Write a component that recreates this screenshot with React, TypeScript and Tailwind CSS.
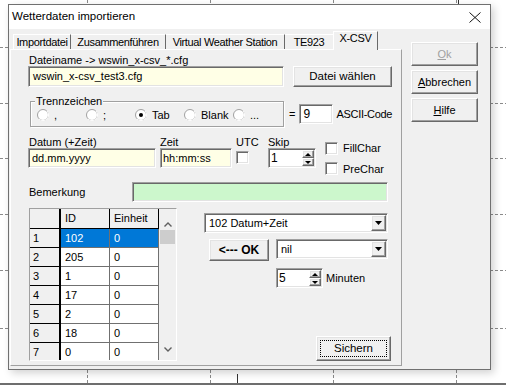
import React from 'react';

// classic win32 3D edges
const raised =
  'bg-[#f0f0f0] border border-t-white border-l-white border-r-[#696969] border-b-[#696969] shadow-[inset_-1px_-1px_0_#a0a0a0,inset_1px_1px_0_#e3e3e3]';
const sunken =
  'border border-t-[#a0a0a0] border-l-[#a0a0a0] border-r-white border-b-white shadow-[inset_1px_1px_0_#696969,inset_-1px_-1px_0_#e3e3e3]';

const rows = [
  ['1', '102', '0'],
  ['2', '205', '0'],
  ['3', '1', '0'],
  ['4', '17', '0'],
  ['5', '2', '0'],
  ['6', '18', '0'],
  ['7', '0', '0'],
];

function Radio({ checked, label }: { checked?: boolean; label: string }) {
  return (
    <div className="flex items-center w-[49px]">
      <svg width="12" height="12" viewBox="0 0 12 12" className="shrink-0">
        <circle cx="6" cy="6" r="5.5" fill="#ffffff" stroke="#a0a0a0" />
        <path d="M2 10 A5.5 5.5 0 0 0 10 2" stroke="#ffffff" fill="none" />
        {checked && <circle cx="6" cy="6" r="2" fill="#000000" />}
      </svg>
      <span className="ml-[5px]">{label}</span>
    </div>
  );
}

function CheckBox() {
  return <div className={`w-[13px] h-[13px] bg-white ${sunken}`} />;
}

function Spin({ value, width }: { value: string; width: string }) {
  return (
    <div className={`flex bg-white h-[20px] ${width} ${sunken}`}>
      <span className="flex-1 pl-[2px] leading-[18px] text-[12px]">{value}</span>
      <div className="flex flex-col w-[12px] my-[1px] mr-[1px]">
        <div className={`flex-1 flex items-center justify-center ${raised}`}>
          <svg width="6" height="3" viewBox="0 0 6 3"><path d="M0 3 L3 0 L6 3 Z" fill="#000" /></svg>
        </div>
        <div className={`flex-1 flex items-center justify-center ${raised}`}>
          <svg width="6" height="3" viewBox="0 0 6 3"><path d="M0 0 L3 3 L6 0 Z" fill="#000" /></svg>
        </div>
      </div>
    </div>
  );
}

function Combo({ value, width }: { value: string; width: string }) {
  return (
    <div className={`flex bg-white h-[20px] ${width} ${sunken}`}>
      <span className="flex-1 pl-[4px] leading-[18px]">{value}</span>
      <div className={`w-[15px] my-[1px] mr-[1px] flex items-center justify-center ${raised}`}>
        <svg width="7" height="4" viewBox="0 0 7 4"><path d="M0 0 L3.5 4 L7 0 Z" fill="#000" /></svg>
      </div>
    </div>
  );
}

function Chevron({ up }: { up?: boolean }) {
  return (
    <svg width="8" height="5" viewBox="0 0 8 5">
      <path d={up ? 'M0.5 4.5 L4 1 L7.5 4.5' : 'M0.5 0.5 L4 4 L7.5 0.5'} stroke="#606060" strokeWidth="1.4" fill="none" />
    </svg>
  );
}

function Grid() {
  return (
    <div className={`flex w-[148px] h-[153px] bg-white overflow-hidden ${sunken}`}>
      <div className="w-[129px] overflow-hidden">
        <div className="flex h-[20px]">
          <div className="w-[31px] bg-[#f0f0f0] border-r-2 border-b border-black" />
          <div className="w-[49px] bg-[#f0f0f0] border-r border-b border-black pl-[4px] leading-[19px]">ID</div>
          <div className="w-[49px] bg-[#f0f0f0] border-r border-b border-black pl-[4px] leading-[19px]">Einheit</div>
        </div>
        {rows.map((r, i) => (
          <div key={r[0]} className="flex h-[19px]">
            <div className="w-[31px] bg-[#f0f0f0] border-r-2 border-b border-black pl-[3px] leading-[18px]">{r[0]}</div>
            <div
              className={`w-[49px] border-r border-b border-[#707070] pl-[4px] leading-[18px] ${
                i === 0 ? 'bg-[#0078d7] text-white' : 'bg-white'
              }`}
            >
              {r[1]}
            </div>
            <div
              className={`w-[49px] border-r border-b border-[#707070] pl-[4px] leading-[18px] ${
                i === 0 ? 'bg-[#0078d7] text-white' : 'bg-white'
              }`}
            >
              {r[2]}
            </div>
          </div>
        ))}
      </div>
      <div className="w-[17px] bg-[#f0f0f0] flex flex-col items-center">
        <div className="h-[18px] flex items-end">
          <Chevron up />
        </div>
        <div className="mt-[3px] w-[15px] h-[14px] bg-[#cdcdcd]" />
        <div className="mt-auto mb-[8px]">
          <Chevron />
        </div>
      </div>
    </div>
  );
}

export default function App() {
  return (
    <div className="relative w-[506px] h-[385px] bg-white overflow-hidden font-['Liberation_Sans',Arial,sans-serif] text-[11px] text-black">
      <svg className="absolute inset-0" width="506" height="385">
        {[47, 103, 158, 214, 270, 328].map((y) => (
          <line key={y} x1="0" y1={y + 0.5} x2="506" y2={y + 0.5} stroke="#8a8a8a" strokeDasharray="3 2" />
        ))}
        {[87, 210, 333, 456].map((x) => (
          <line key={x} x1={x + 0.5} y1="0" x2={x + 0.5} y2="385" stroke="#8a8a8a" strokeDasharray="3 2" />
        ))}
        <line x1="237.5" y1="374" x2="237.5" y2="383" stroke="#333" />
        <line x1="458.5" y1="0" x2="458.5" y2="4" stroke="#333" />
      </svg>

      <div className="relative flex flex-col h-full">
        <div className="ml-[8px] mt-[4px] w-[483px] h-[366px] flex flex-col border border-[#707070] shadow-[3px_3px_8px_rgba(0,0,0,0.18)]">
          {/* title bar */}
          <div className="h-[24px] bg-white flex items-center pl-[3px] text-[11.5px]">
            <span>Wetterdaten importieren</span>
            <svg className="ml-auto mr-[9px]" width="12" height="11" viewBox="0 0 12 11">
              <path d="M0.5 0.5 L11.5 10.5 M11.5 0.5 L0.5 10.5" stroke="#111" strokeWidth="1" />
            </svg>
          </div>

          {/* body */}
          <div className="flex-1 bg-[#f0f0f0] flex">
            <div className="ml-[1px] w-[392px] flex flex-col">
              {/* tabs */}
              <div className="h-[20px] flex items-end pl-[3px] tracking-[-0.35px]">
                <div className="w-[58px] h-[15px] border-l border-t border-white border-r border-r-[#696969] text-center leading-[14px]">Importdatei</div>
                <div className="w-[95px] h-[15px] border-t border-white border-r border-r-[#696969] text-center leading-[14px]">Zusammenführen</div>
                <div className="w-[119px] h-[15px] border-t border-white border-r border-r-[#696969] text-center leading-[14px]">Virtual Weather Station</div>
                <div className="w-[48px] h-[15px] border-t border-white text-center leading-[14px]">TE923</div>
                <div className="relative z-10 -mb-px w-[45px] h-[19px] bg-[#f0f0f0] border-l border-t border-white border-r border-r-[#696969] text-center leading-[13px]">X-CSV</div>
              </div>

              {/* panel */}
              <div className="h-[317px] border border-t-white border-l-white border-r-[#a0a0a0] border-b-[#a0a0a0] pl-[17px] pt-[4px]">
                <div className="ml-[1px] h-[12px] leading-[12px]">Dateiname -&gt; wswin_x-csv_*.cfg</div>
                <div className="flex">
                  <div className={`w-[256px] h-[21px] bg-[#ffffe6] pl-[4px] leading-[19px] ${sunken}`}>wswin_x-csv_test3.cfg</div>
                  <div className={`ml-[9px] w-[99px] h-[21px] flex items-center justify-center text-[11.5px] ${raised}`}>Datei wählen</div>
                </div>

                {/* Trennzeichen */}
                <div className="mt-[9px] flex items-start">
                  <div className="relative ml-[2px] pt-[5px]">
                    <div className="w-[254px] h-[26px] border border-[#a0a0a0] shadow-[inset_1px_1px_0_#ffffff,1px_1px_0_#ffffff] flex items-center pl-[6px] pt-[2px]">
                      <Radio label="," />
                      <Radio label=";" />
                      <Radio checked label="Tab" />
                      <Radio label="Blank" />
                      <Radio label="..." />
                    </div>
                    <span className="absolute top-0 left-[5px] bg-[#f0f0f0] px-[1px] leading-[11px]">Trennzeichen</span>
                  </div>
                  <div className="ml-[5px] mt-[8px] flex items-center">
                    <span>=</span>
                    <div className={`ml-[4px] w-[34px] h-[20px] bg-white pl-[3px] leading-[18px] text-[12px] ${sunken}`}>9</div>
                    <span className="ml-[3px] tracking-[-0.3px]">ASCII-Code</span>
                  </div>
                </div>

                {/* Datum / Zeit / UTC / Skip */}
                <div className="mt-[9px] flex items-start">
                  <div className="w-[128px]">
                    <div className="ml-[1px] h-[12px] leading-[12px]">Datum (+Zeit)</div>
                    <div className={`h-[20px] bg-[#ffffe6] pl-[3px] leading-[18px] ${sunken}`}>dd.mm.yyyy</div>
                  </div>
                  <div className="ml-[4px] w-[72px]">
                    <div className="h-[12px] leading-[12px]">Zeit</div>
                    <div className={`h-[20px] bg-[#ffffe6] pl-[2px] leading-[18px] ${sunken}`}>hh:mm:ss</div>
                  </div>
                  <div className="ml-[4px] w-[32px]">
                    <div className="h-[12px] leading-[12px]">UTC</div>
                    <div className="mt-[3px]">
                      <CheckBox />
                    </div>
                  </div>
                  <div>
                    <div className="h-[12px] leading-[12px]">Skip</div>
                    <Spin value="1" width="w-[48px]" />
                  </div>
                  <div className="ml-[9px] mt-[4px] flex flex-col gap-[4px]">
                    <div className="flex items-center">
                      <CheckBox />
                      <span className="ml-[5px]">FillChar</span>
                    </div>
                    <div className="flex items-center">
                      <CheckBox />
                      <span className="ml-[5px]">PreChar</span>
                    </div>
                  </div>
                </div>

                {/* Bemerkung */}
                <div className="mt-[5px] flex items-center h-[20px]">
                  <span className="ml-[1px] w-[103px]">Bemerkung</span>
                  <div className={`w-[256px] h-[20px] bg-[#ccf7cc] ${sunken}`} />
                </div>

                {/* grid + mapping */}
                <div className="mt-[6px] flex items-start">
                  <div className="ml-[1px]">
                    <Grid />
                  </div>
                  <div className="ml-[27px] flex flex-col">
                    <div className="mt-[5px]">
                      <Combo value="102 Datum+Zeit" width="w-[184px]" />
                    </div>
                    <div className="mt-[6px] flex items-start">
                      <div className={`ml-[5px] w-[60px] h-[22px] flex items-center justify-center font-bold text-[12px] ${raised}`}>&lt;--- OK</div>
                      <div className="ml-[7px]">
                        <Combo value="nil" width="w-[112px]" />
                      </div>
                    </div>
                    <div className="mt-[7px] ml-[72px] flex items-center">
                      <Spin value="5" width="w-[47px]" />
                      <span className="ml-[3px]">Minuten</span>
                    </div>
                    <div className={`mt-[48px] ml-[112px] w-[75px] h-[25px] p-[3px] ${raised} border-r-[#333] border-b-[#333]`}>
                      <div className="h-full border border-dotted border-black flex items-center justify-center text-[11.5px]">Sichern</div>
                    </div>
                  </div>
                </div>
              </div>
            </div>

            {/* dialog buttons */}
            <div className="ml-[9px] mt-[13px] flex flex-col gap-[4px]">
              <div className={`w-[67px] h-[24px] flex items-center justify-center text-[#a0a0a0] ${raised}`}>
                <span><span className="underline">O</span>k</span>
              </div>
              <div className={`w-[67px] h-[24px] flex items-center justify-center ${raised}`}>
                <span><span className="underline">A</span>bbrechen</span>
              </div>
              <div className={`w-[67px] h-[24px] flex items-center justify-center ${raised}`}>
                <span><span className="underline">H</span>ilfe</span>
              </div>
            </div>
          </div>
        </div>
        <div className="mt-auto h-[2px] bg-[#6e6e6e]" />
      </div>
    </div>
  );
}
